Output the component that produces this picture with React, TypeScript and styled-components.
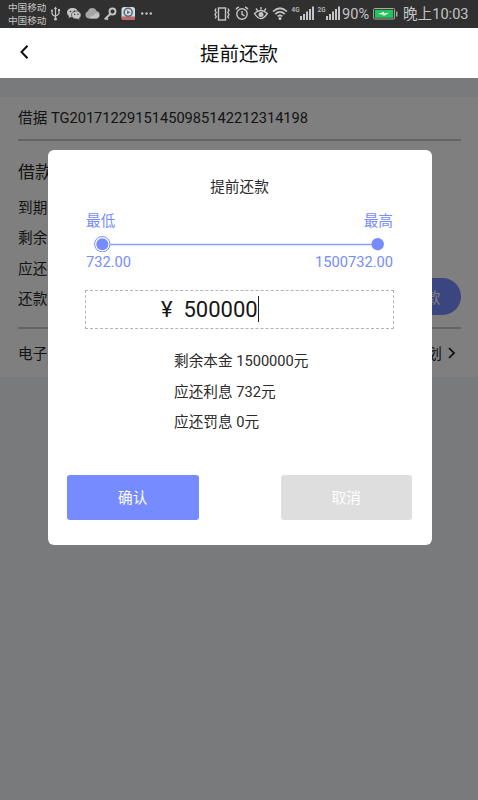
import React from "react";
import styled, { createGlobalStyle } from "styled-components";

const Global = createGlobalStyle`
  * { box-sizing: border-box; }
  html, body { margin: 0; padding: 0; overflow: hidden; }
  body { font-family: Roboto, "Noto Sans CJK SC", sans-serif; color: #2b2b2b; }
  button { font-family: inherit; border: 0; padding: 0; }
`;

const Screen = styled.div`
  width: 478px;
  height: 800px;
  display: flex;
  flex-direction: column;
  background: #f3f5f8;
  overflow: hidden;
`;

const StatusBar = styled.div`
  height: 28px;
  flex: none;
  background: #303030;
  color: #c4c4c4;
  display: flex;
  align-items: center;
  padding-left: 8px;
  white-space: nowrap;
`;

const Carriers = styled.div`
  width: 40px;
  font-size: 9.6px;
  line-height: 13px;
`;

const StatusIcons = styled.svg`
  flex: none;
  display: block;
`;

const Percent = styled.span`
  width: 31px;
  font-size: 14.6px;
  line-height: 28px;
`;

const Clock = styled.span`
  font-size: 14.6px;
  line-height: 28px;
  margin-left: 4px;
`;

const Header = styled.header`
  height: 50px;
  flex: none;
  background: #fff;
  display: grid;
  grid-template-columns: 60px 1fr 60px;
  align-items: center;
`;

const BackIcon = styled.svg`
  margin: 0 0 2px 17px;
`;

const PageTitle = styled.h1`
  margin: 0;
  padding-top: 4px;
  text-align: center;
  font-size: 19.5px;
  line-height: 28px;
  font-weight: 400;
  color: #111;
`;

const Content = styled.main`
  flex: 1;
  position: relative;
  padding-top: 19px;
`;

const Card = styled.section`
  background: #fff;
  height: 280px;
  padding: 0 17px 0 18px;
  font-size: 14.65px;
`;

const Row = styled.div<{ $height: number; $size?: number; $lift?: number; $divided?: boolean }>`
  height: ${(p) => p.$height}px;
  display: flex;
  align-items: center;
  justify-content: space-between;
  white-space: nowrap;
  font-size: ${(p) => p.$size ?? 14.65}px;
  padding-bottom: ${(p) => p.$lift ?? 0}px;
  border-bottom: ${(p) => (p.$divided ? "2px solid #c8c8c8" : "0")};
`;

const Facts = styled.div`
  height: 188px;
  padding-top: 10px;
  border-bottom: 2px solid #c8c8c8;
  display: flex;
  justify-content: space-between;
  align-items: flex-end;
`;

const FactList = styled.div`
  align-self: flex-start;
`;

const Pill = styled.button`
  width: 100px;
  height: 37px;
  border-radius: 19px;
  background: #768bff;
  color: #fff;
  font-size: 14.65px;
  margin-bottom: 12px;
`;

const Link = styled.span`
  display: flex;
  align-items: center;
  gap: 4px;
  padding-right: 4px;
`;

const Backdrop = styled.div`
  position: absolute;
  inset: 0;
  background: rgba(0, 0, 0, 0.5);
  padding: 72px 46.5px 0 47.5px;
`;

const Dialog = styled.div`
  height: 395px;
  border-radius: 6px;
  background: #fff;
  font-size: 14.65px;
  padding: 27px 19.5px 0;
`;

const DialogTitle = styled.h2`
  margin: 0 0 13px;
  height: 21px;
  line-height: 21px;
  font-size: 14.65px;
  font-weight: 400;
  text-align: center;
`;

const Range = styled.div`
  margin: 0 19px;
  color: #768bff;
`;

const RangeLabels = styled.div`
  display: flex;
  justify-content: space-between;
  height: 21px;
  line-height: 21px;
`;

const Track = styled.svg`
  display: block;
`;

const Amount = styled.div`
  margin: 17px 18px 0;
  height: 39px;
  border: 1px dashed #b4b4b4;
  display: flex;
  align-items: center;
  padding: 0 0 1px 75px;
  font-size: 22px;
  color: #161616;
`;

const Currency = styled.span`
  width: 22.5px;
`;

const Caret = styled.span`
  width: 1px;
  height: 26px;
  background: #222;
`;

const Summary = styled.div`
  margin: 17px 0 0 107px;
`;

const Line = styled.div`
  height: 30.5px;
  line-height: 31px;
`;

const Actions = styled.div`
  display: flex;
  justify-content: space-between;
  margin-top: 37.5px;
`;

const Action = styled.button<{ $muted?: boolean }>`
  width: 131.5px;
  height: 45px;
  padding-bottom: 3px;
  border-radius: 3px;
  background: ${(p) => (p.$muted ? "#dedede" : "#768bff")};
  color: #fff;
  font-size: 14.65px;
`;

const Signal = ({ x, label }: { x: number; label: string }) => (
  <g>
    <text x={x} y="12" fontSize="7.5" fontWeight="500" textLength="8" lengthAdjust="spacingAndGlyphs">{label}</text>
    {[4, 6, 8.5, 11, 13.5].map((h, i) => (
      <rect key={i} x={x + 8.5 + i * 3} y={20 - h} width="2" height={h} />
    ))}
  </g>
);

const facts = ["到期", "剩余", "应还", "还款"];
const summary = ["剩余本金 1500000元", "应还利息 732元", "应还罚息 0元"];

export default function App() {
  return (
    <Screen>
      <Global />
      <StatusBar>
        <Carriers>
          <div>中国移动</div>
          <div>中国移动</div>
        </Carriers>
        <StatusIcons width="294" height="28" viewBox="48 0 294 28" fill="#c4c4c4">
          <g fill="none" stroke="#c4c4c4" strokeWidth="1.2">
            <path d="M55.5 8v11M52 10.5v3q0 1.5 3.5 3M59 10v3q0 1.5-3.5 3" />
          </g>
          <path d="M53.8 9l1.7-2.5L57.2 9z" />
          <circle cx="55.5" cy="19" r="1.5" />
          <circle cx="52" cy="10.5" r="1" />
          <rect x="58" y="9" width="2" height="2" />

          <path d="M72.5 8c-3.2 0-5.5 2-5.5 4.6 0 1.5.8 2.7 2 3.5l-.5 2 2.3-1.1c.6.2 1.3.2 2 .2 3 0 5.3-2 5.3-4.6S75.7 8 72.5 8z" />
          <path d="M76.3 11c-2.8 0-4.8 1.8-4.8 4s2 4.1 4.8 4.1l1.5-.2 2 1-.4-1.8c1-.7 1.7-1.8 1.7-3.1 0-2.2-2-4-4.8-4z" stroke="#303030" strokeWidth=".6" />
          <g fill="#303030">
            <circle cx="70.5" cy="11.5" r=".8" /><circle cx="74.3" cy="11.2" r=".8" />
            <circle cx="74.7" cy="14.3" r=".7" /><circle cx="78" cy="14.3" r=".7" />
          </g>
          <path d="M88.5 18.500a3.800 3.800 0 0 1-.5-7.300 4.500 4.500 0 0 1 8.500-.2 3.800 3.800 0 0 1 0 7.500z" fill="#a5a5a5" />
          <path d="M90 18.500q0-3.500 3.500-3 2.500-3.500 5.200-1.500 1.200 4-2.200 4.500z" fill="#c2c2c2" />
          <g fill="none" stroke="#c4c4c4" strokeWidth="1.9">
            <circle cx="112.5" cy="11.5" r="3" />
            <path d="M110.5 13.800l-5.800 5.600M106.200 18l1.700 1.700" />
          </g>
          <rect x="121.5" y="7" width="13.5" height="13" rx="2.5" fill="#d4dadd" />
          <path d="M121.5 16.500H135v1a2.500 2.500 0 0 1-2.500 2.500H124a2.500 2.500 0 0 1-2.500-2.500z" fill="#c56564" />
          <circle cx="128.2" cy="12.3" r="4" fill="#d2e0e5" stroke="#427188" strokeWidth="1.6" />
          <path d="M127 10.300l3.300 2-3.300 2z" fill="#b74e4b" />
          <circle cx="142.2" cy="13.5" r="1.2" /><circle cx="146.5" cy="13.5" r="1.2" /><circle cx="150.8" cy="13.5" r="1.2" />

          <g fill="none" stroke="#c4c4c4" strokeWidth="1.4">
            <rect x="218.5" y="8" width="7" height="12" />
            <path d="M216 8.500l-1 2 1.200 2-1.200 2 1.200 2-1 2M228 8.500l1 2-1.200 2 1.200 2-1.200 2 1 2" />
            <circle cx="242" cy="14" r="5.2" />
            <path d="M242 11v3.300l2.500 1.500M236 9.500q1-2 3-2.500M248 9.500q-1-2-3-2.500" />
            <path d="M254.5 13.500q6.300-6 12.800 0-6.500 10-12.800 0zM256 8.500l1.500 2M261 7v2.500M266 8.500l-1.500 2" />
            <path d="M273 11.500q7-6.500 14 0M275.300 14q4.700-4.200 9.400 0M277.700 16.400q2.300-2 4.600 0" strokeWidth="1.7" />
          </g>
          <circle cx="261" cy="14.5" r="2.5" />
          <circle cx="280" cy="18.4" r="1.5" />
          <Signal x={291.5} label="4G" />
          <Signal x={317.5} label="2G" />
        </StatusIcons>
        <Percent>90%</Percent>
        <StatusIcons width="26" height="14" viewBox="0 0 26 14">
          <rect x=".6" y="1.5" width="21" height="10.5" rx="1" fill="#303030" stroke="#a5aaa6" />
          <rect x="2" y="2.8" width="18.2" height="8" fill="#20c659" />
          <path d="M5 7l6-2.200v1.500l5-.5-5.500 3.500V7.700z" fill="#eee" />
          <rect x="23" y="4.5" width="1.5" height="5" fill="#a5aaa6" />
        </StatusIcons>
        <Clock>晚上10:03</Clock>
      </StatusBar>

      <Header>
        <BackIcon width="16" height="18" viewBox="0 0 16 18" fill="none" stroke="#111" strokeWidth="2">
          <path d="M10.5 2.800L4.500 9l6 6.200" />
        </BackIcon>
        <PageTitle>提前还款</PageTitle>
      </Header>

      <Content>
        <Card>
          <Row $height={44} $lift={4} $divided>借据 TG20171229151450985142212314198</Row>
          <Facts>
            <FactList>
              <Row $height={40} $size={17} $lift={2}>借款</Row>
              {facts.map((t) => <Row key={t} $height={30.5}>{t}</Row>)}
            </FactList>
            <Pill>提前还款</Pill>
          </Facts>
          <Row $height={48} $lift={1}>
            <span>电子</span>
            <Link>
              还款计划
              <svg width="11" height="14" viewBox="0 0 11 14" fill="none" stroke="#161616" strokeWidth="1.7">
                <path d="M3 2l5 5-5 5" />
              </svg>
            </Link>
          </Row>
        </Card>

        <Backdrop>
          <Dialog role="dialog">
            <DialogTitle>提前还款</DialogTitle>
            <Range>
              <RangeLabels><span>最低</span><span>最高</span></RangeLabels>
              <Track width="306" height="20" viewBox="86 232 306 20">
                <path d="M102 244.500H378" stroke="#8e9ef8" strokeWidth="1.7" />
                <circle cx="102.3" cy="244.2" r="7.7" fill="#fff" stroke="#768bff" />
                <circle cx="102.3" cy="244.2" r="6" fill="#768bff" />
                <circle cx="377.7" cy="244.2" r="6.2" fill="#768bff" />
              </Track>
              <RangeLabels><span>732.00</span><span>1500732.00</span></RangeLabels>
            </Range>
            <Amount><Currency>¥</Currency>500000<Caret /></Amount>
            <Summary>{summary.map((t) => <Line key={t}>{t}</Line>)}</Summary>
            <Actions>
              <Action>确认</Action>
              <Action $muted>取消</Action>
            </Actions>
          </Dialog>
        </Backdrop>
      </Content>
    </Screen>
  );
}
